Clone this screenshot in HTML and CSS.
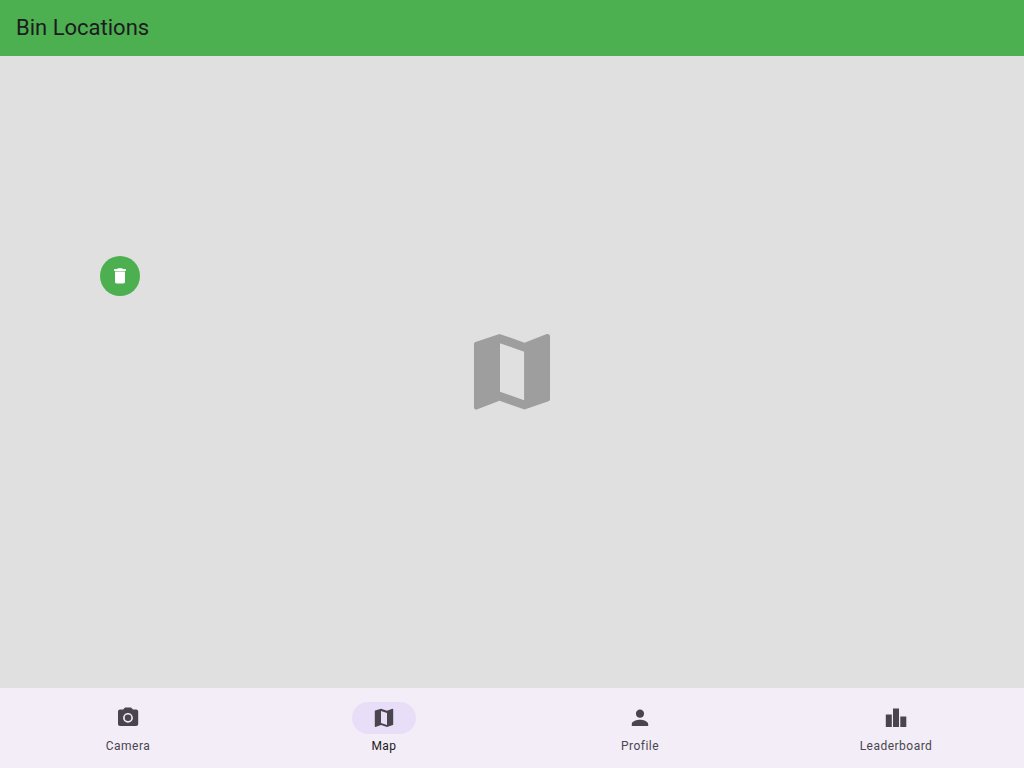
FILE: index.html
```html
<!DOCTYPE html>
<html lang="en">
<head>
<meta charset="utf-8">
<meta name="viewport" content="width=device-width, initial-scale=1">
<title>Bin Locations</title>
<link rel="stylesheet" href="styles.css">
</head>
<body>
<header class="app-bar"><h1 class="app-title">Bin Locations</h1></header>
<main class="map">
  <svg class="map-placeholder" viewBox="0 0 24 24" aria-hidden="true"><path d="M20.5 2.85l-.16.03L15 4.95 9 2.85 3.24 4.8c-.21.07-.36.25-.36.48V20.5c0 .28.22.5.5.5l.16-.03L9 18.9l6 2.1 5.76-2c.21-.07.36-.25.36-.48V3.35c0-.28-.34-.5-.62-.5zM14.900 18.750l-5.780-2.010V5.100l5.780 2.010V18.750z"/></svg>
  <button class="bin-marker" type="button" aria-label="Bin">
    <svg class="bin-icon" viewBox="0 0 24 24" aria-hidden="true"><path d="M6 19c0 1.100.9 2 2 2h8c1.100 0 2-.9 2-2V6.500H6V19zM19 3.600h-3.500l-1-1h-5l-1 1H5V6h14V3.600z"/></svg>
  </button>
</main>
<nav class="nav-bar" aria-label="Main">
  <a class="nav-item" href="#camera">
    <span class="nav-pill"><svg class="nav-icon" viewBox="0 0 24 24" aria-hidden="true"><circle cx="12" cy="11.800" r="3.300"/><path d="M9 1.600L7.170 3.600H4c-1.100 0-2 .9-2 2V18c0 1.100.9 2 2 2h16.200c1.100 0 2-.9 2-2V5.600c0-1.100-.9-2-2-2h-3.170L15 1.600H9zm3 15.100c-2.710 0-4.900-2.190-4.900-4.900s2.190-4.900 4.900-4.900 4.900 2.190 4.900 4.900-2.190 4.900-4.900 4.900z"/></svg></span>
    <span class="nav-label">Camera</span>
  </a>
  <a class="nav-item nav-item-active" href="#map" aria-current="page">
    <span class="nav-pill"><svg class="nav-icon" viewBox="0 0 24 24" aria-hidden="true"><path d="M20.5 2.700l-.16.03L15 4.800 9 2.700 3.160 4.600c-.21.07-.36.25-.36.48V20.500c0 .28.22.5.5.5l.16-.03L9 18.900l6 2.100 5.840-1.900c.21-.07.36-.25.36-.48V3.200c0-.28-.42-.5-.7-.5zM15 19l-6-2.110V5l6 2.110V19z"/></svg></span>
    <span class="nav-label">Map</span>
  </a>
  <a class="nav-item" href="#profile">
    <span class="nav-pill"><svg class="nav-icon" viewBox="0 0 24 24" aria-hidden="true"><path d="M12 11.800c2.260 0 4.100-1.840 4.100-4.100S14.260 3.600 12 3.600 7.900 5.440 7.900 7.700s1.840 4.100 4.100 4.100zm0 2c-2.750 0-8.200 1.400-8.200 4.200v2h16.400v-2c0-2.750-5.450-4.200-8.200-4.200z"/></svg></span>
    <span class="nav-label">Profile</span>
  </a>
  <a class="nav-item" href="#leaderboard">
    <span class="nav-pill"><svg class="nav-icon" viewBox="0 0 24 24" aria-hidden="true"><path d="M7.800 21H1.800V8.600h6V21zM15 2.600H9V21h6V2.600zM22.300 10.600h-6V21h6V10.600z"/></svg></span>
    <span class="nav-label">Leaderboard</span>
  </a>
</nav>
</body>
</html>
```
FILE: styles.css
```css
* { box-sizing: border-box; }
body {
  margin: 0;
  min-height: 100vh;
  display: flex;
  flex-direction: column;
  font-family: Roboto, "Liberation Sans", sans-serif;
  color: #1d1b20;
}
.app-bar {
  display: flex;
  align-items: center;
  min-height: 56px;
  padding: 0 16px;
  background: #4caf50;
}
.app-title {
  margin: 0;
  font-size: 22px;
  line-height: 28px;
  font-weight: 400;
}
.map {
  position: relative;
  flex: 1;
  display: flex;
  align-items: center;
  justify-content: center;
  background: #e0e0e0;
}
.map-placeholder {
  width: 100px;
  height: 100px;
  fill: #9e9e9e;
}
.bin-marker {
  position: absolute;
  left: 100px;
  top: 200px;
  width: 40px;
  height: 40px;
  display: flex;
  align-items: center;
  justify-content: center;
  padding: 0;
  border: 0;
  border-radius: 50%;
  background: #4caf50;
}
.bin-icon {
  width: 20px;
  height: 20px;
  fill: #fff;
}
.nav-bar {
  display: flex;
  min-height: 80px;
  background: #f3edf7;
}
.nav-item {
  flex: 1;
  display: flex;
  flex-direction: column;
  align-items: center;
  justify-content: center;
  gap: 4px;
  color: #49454f;
  text-decoration: none;
}
.nav-pill {
  display: flex;
  align-items: center;
  justify-content: center;
  width: 64px;
  height: 32px;
  border-radius: 16px;
}
.nav-icon {
  width: 24px;
  height: 24px;
  fill: #49454f;
}
.nav-label {
  font-size: 12px;
  line-height: 16px;
  font-weight: 400;
  letter-spacing: 0.04em;
}
.nav-item-active { color: #1d1b20; }
.nav-item-active .nav-pill { background: #e8def8; }
```
